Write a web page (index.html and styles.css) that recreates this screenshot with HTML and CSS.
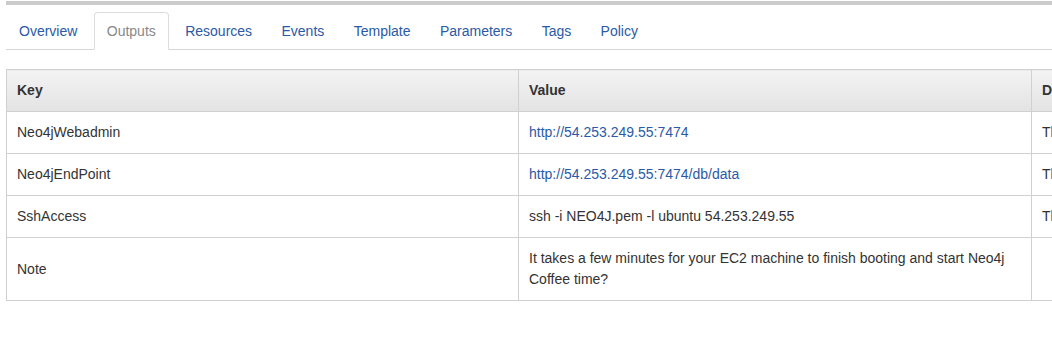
FILE: index.html
```html
<!DOCTYPE html>
<html>
<head>
<meta charset="utf-8">
<link rel="stylesheet" href="styles.css">
</head>
<body>
<div class="page">
  <div class="topbar"></div>
  <ul class="tabs">
    <li><a href="#">Overview</a></li>
    <li class="active"><a href="#">Outputs</a></li>
    <li><a href="#">Resources</a></li>
    <li><a href="#">Events</a></li>
    <li><a href="#">Template</a></li>
    <li><a href="#">Parameters</a></li>
    <li><a href="#">Tags</a></li>
    <li><a href="#">Policy</a></li>
  </ul>
  <table class="outputs">
    <colgroup>
      <col class="c-key"><col class="c-val"><col class="c-desc">
    </colgroup>
    <thead>
      <tr><th>Key</th><th>Value</th><th>Description</th></tr>
    </thead>
    <tbody>
      <tr><td>Neo4jWebadmin</td><td><a href="#">http://54.253.249.55:7474</a></td><td>The URL for the Neo4j web admin</td></tr>
      <tr><td>Neo4jEndPoint</td><td><a href="#">http://54.253.249.55:7474/db/data</a></td><td>The REST end point</td></tr>
      <tr><td>SshAccess</td><td>ssh -i NEO4J.pem -l ubuntu 54.253.249.55</td><td>This is how you gain remote access</td></tr>
      <tr><td>Note</td><td>It takes a few minutes for your EC2 machine to finish booting and start Neo4j<br>Coffee time?</td><td></td></tr>
    </tbody>
  </table>
</div>
</body>
</html>
```
FILE: styles.css
```css
html, body {
  margin: 0;
  padding: 0;
  background: #fff;
  overflow: hidden;
}
body {
  font-family: "Liberation Sans", Arial, Helvetica, sans-serif;
  font-size: 14px;
  color: #333;
}
.page {
  padding: 1px 0 0 6px;
  width: 1400px;
}
.topbar {
  height: 4px;
  background: #cbcbcb;
}
.tabs {
  list-style: none;
  margin: 7px 0 0 0;
  padding: 0;
  display: flex;
  border-bottom: 1px solid #d6d6d6;
}
.tabs li {
  margin: 0 3.4px -1px 0;
}
.tabs a {
  display: block;
  padding: 8px 12px;
  line-height: 20px;
  border: 1px solid transparent;
  border-radius: 4px 4px 0 0;
  color: #2a5aa6;
  text-decoration: none;
}
.tabs .active a {
  color: #888;
  background: #fff;
  border-color: #ddd #ddd transparent #ddd;
}
.outputs {
  margin-top: 19px;
  border-collapse: collapse;
  table-layout: fixed;
  width: 1425px;
  border: 1px solid #d0d0d0;
}
.c-key { width: 512px; }
.c-val { width: 513px; }
.c-desc { width: 400px; }
.outputs th, .outputs td {
  text-align: left;
  vertical-align: middle;
  padding: 10px;
  line-height: 21px;
  border: 1px solid #d0d0d0;
  white-space: nowrap;
  overflow: hidden;
}
.outputs th {
  font-weight: bold;
  color: #333;
  background: linear-gradient(#f3f3f3, #e3e3e3);
}
.outputs td a {
  color: #2a5aa6;
  text-decoration: none;
}
```
